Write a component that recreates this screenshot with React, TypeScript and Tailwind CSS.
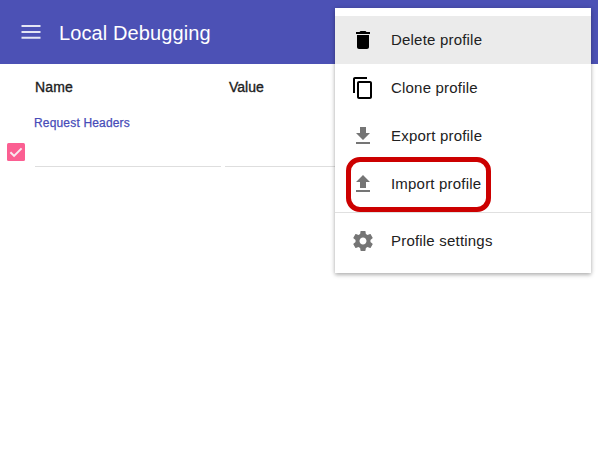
import type { ReactNode } from 'react';

const paths = {
  trash: 'M6 19c0 1.1.9 2 2 2h8c1.1 0 2-.9 2-2V7H6v12zM19 4h-3.5l-1-1h-5l-1 1H5v2h14V4z',
  copy: 'M16 1H4c-1.1 0-2 .9-2 2v14h2V3h12V1zm3 4H8c-1.1 0-2 .9-2 2v14c0 1.1.9 2 2 2h11c1.1 0 2-.9 2-2V7c0-1.1-.9-2-2-2zm0 16H8V7h11v14z',
  download: 'M19 9h-4V3H9v6H5l7 7 7-7zM5 18v2h14v-2H5z',
  upload: 'M9 16h6v-6h4l-7-7-7 7h4v6zm-4 2h14v2H5v-2z',
  gear: 'M19.43 12.98c.04-.32.07-.64.07-.98s-.03-.66-.07-.98l2.11-1.65c.19-.15.24-.42.12-.64l-2-3.46c-.12-.22-.39-.3-.61-.22l-2.49 1c-.52-.4-1.08-.73-1.69-.98l-.38-2.65C14.46 2.18 14.25 2 14 2h-4c-.25 0-.46.18-.49.42l-.38 2.65c-.61.25-1.17.59-1.69.98l-2.49-1c-.23-.09-.49 0-.61.22l-2 3.46c-.13.22-.07.49.12.64l2.11 1.65c-.04.32-.07.65-.07.98s.03.66.07.98l-2.11 1.65c-.19.15-.24.42-.12.64l2 3.46c.12.22.39.3.61.22l2.49-1c.52.4 1.08.73 1.69.98l.38 2.65c.03.24.24.42.49.42h4c.25 0 .46-.18.49-.42l.38-2.65c.61-.25 1.17-.59 1.69-.98l2.49 1c.23.09.49 0 .61-.22l2-3.46c.12-.22.07-.49-.12-.64l-2.11-1.65zM12 15.5c-1.93 0-3.5-1.57-3.5-3.5s1.57-3.5 3.5-3.5 3.5 1.57 3.5 3.5-1.57 3.5-3.5 3.5z',
};

function MenuItem({ icon, tone, active, children }: { icon: keyof typeof paths; tone: string; active?: boolean; children: ReactNode }) {
  return (
    <button className={`flex h-12 w-full items-center gap-4 px-4 text-left text-[15px] tracking-[0.2px] text-[#212121] ${active ? 'bg-[#ebebeb]' : ''}`}>
      <svg viewBox="0 0 24 24" className={`size-6 shrink-0 ${tone}`}>
        <path d={paths[icon]} />
      </svg>
      <span className="whitespace-nowrap">{children}</span>
    </button>
  );
}

export default function App() {
  return (
    <div className="relative h-[450px] w-[598px] overflow-hidden bg-white font-['Liberation_Sans',Arial,sans-serif]">
      <header className="flex h-16 items-center bg-[#4c51b5] pl-5 text-white">
        <svg viewBox="0 0 22 22" className="mr-[17px] size-[22px] fill-[#e4e5f4]">
          <path d="M1.5 4h19v2h-19zM1.5 10h19v2h-19zM1.5 15.7h19v2h-19z" />
        </svg>
        <h1 className="pt-0.5 text-[20px] tracking-[0.1px]">Local Debugging</h1>
      </header>

      <main>
        <div className="flex pt-[13px] pl-[35px] text-[14px] leading-5 text-[#212121] [-webkit-text-stroke:0.35px]">
          <span className="w-[194px] tracking-[0.15px]">Name</span>
          <span>Value</span>
        </div>
        <p className="mt-[18px] pl-[34px] text-[12px] leading-4 tracking-[0.17px] text-[#474cb8] [-webkit-text-stroke:0.25px]">Request Headers</p>
        <div className="mt-3 flex h-[25px] items-start pl-[7px]">
          <svg viewBox="0 0 18 18" className="mr-[10px] size-[18px]">
            <rect width="18" height="18" rx="1.5" fill="#fb5f92" />
            <path d="M3.4 9.2l3.7 3.7 7.5-7.5" fill="none" stroke="#f8e9ef" strokeWidth="2" />
          </svg>
          <div className="mr-1 h-6 w-[186px] border-b border-[#dedede]" />
          <div className="h-6 w-[186px] border-b border-[#dedede]" />
        </div>
      </main>

      <div className="absolute top-2 left-[335px] w-64 bg-white py-2 shadow-[0_2px_4px_rgba(0,0,0,0.26),0_0_5px_rgba(0,0,0,0.12)]">
        <MenuItem icon="trash" tone="fill-black" active>Delete profile</MenuItem>
        <MenuItem icon="copy" tone="fill-black">Clone profile</MenuItem>
        <MenuItem icon="download" tone="fill-[#757575]">Export profile</MenuItem>
        <MenuItem icon="upload" tone="fill-[#757575]">Import profile</MenuItem>
        <div className="mt-1 mb-1 h-px bg-[#e0e0e0]" />
        <MenuItem icon="gear" tone="fill-[#757575]">Profile settings</MenuItem>
      </div>
      <div className="absolute top-[157px] left-[346px] h-[55px] w-[145px] rounded-[14px] border-[5px] border-[#cc0000]" />
    </div>
  );
}
